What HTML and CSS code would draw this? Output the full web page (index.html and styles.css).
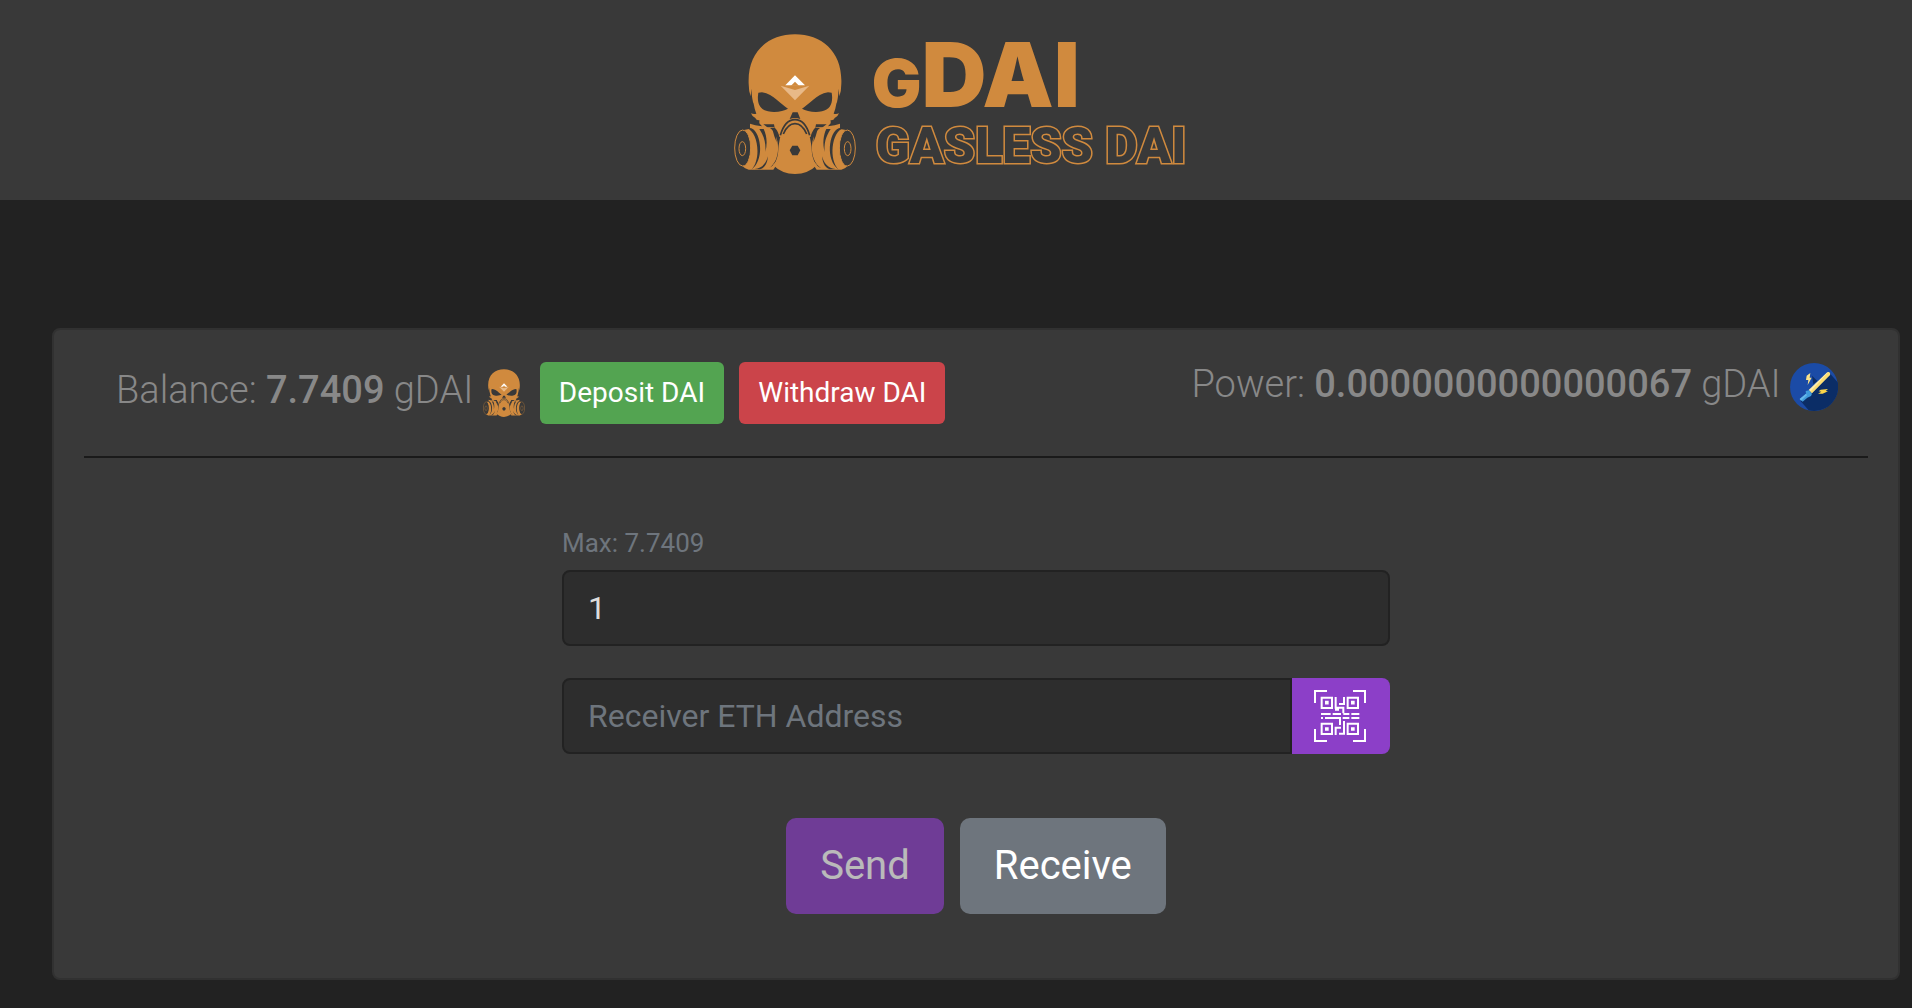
FILE: index.html
```
<!DOCTYPE html>
<html lang="en">
<head>
<meta charset="utf-8">
<title>gDAI - Gasless DAI</title>
<link rel="stylesheet" href="styles.css">
</head>
<body>
<svg class="sprite" aria-hidden="true">
    <symbol id="mask" viewBox="48 40 366 422">
	<path class="bone" d="M92 190C88 95 150 42 231 42C312 42 374 95 370 190Q370 212 364 228L362 205Q360 240 355 250Q353 264 347 280Q355 282 363 279Q359 290 350 293Q348 301 338 299V309L330 318L350 315L366 310V322L335 350H130L96 322V310L112 315L132 318L124 309V299Q114 301 112 293Q103 290 99 279Q107 282 115 280Q109 264 107 250Q102 240 100 205L98 228Q92 212 92 190Z"/>
	<path class="hole" d="M121 217C116 246 124 268 150 273C174 278 197 272 210 265C188 253 168 222 132 216ZM341 217C346 246 338 268 312 273C288 278 265 272 252 265C274 253 294 222 330 216Z"/>
	<path class="hole" d="M224 276H239L247 296Q231 290 215 296ZM136 312L168 312L170 322H150ZM326 312L294 312L292 322H312Z"/>
	<g id="filter">
	    <path class="bone" d="M76 331Q110 318 168 321C188 345 192 415 166 448H92Q78 444 73 436Z"/>
	    <ellipse class="ring" cx="74" cy="383" rx="24" ry="54"/>
	    <ellipse class="hole" cx="77" cy="384" rx="18" ry="51"/>
	    <ellipse class="ring" cx="73" cy="385" rx="10" ry="21"/>
	    <path class="hole" d="M74 372Q84 385 74 401Q66 387 74 372ZM86 324C122 334 130 420 100 448C140 420 130 336 100 324ZM124 326C140 350 144 372 142 395C149 370 146 344 137 326ZM110 446C132 444 144 430 150 408C148 432 138 444 126 447ZM156 323C186 344 192 418 152 444C200 420 192 340 170 322Z"/>
	    <path class="hole" d="M173 330L176 366Q168 348 164 330Z"/>
	</g>
	<use href="#filter" transform="matrix(-1 0 0 1 462 0)"/>
	<path class="bone" d="M231 308C253 308 265 328 276 352Q282 380 282 400Q286 424 297 434Q270 461 231 461Q192 461 165 434Q176 424 180 400Q180 380 186 352C197 328 209 308 231 308Z"/>
	<path class="arc" d="M187 345C196 314 212 298 231 298C250 298 266 314 275 345"/>
	<path class="arc" d="M196 341C205 320 215 310 231 310C247 310 257 320 266 341"/>
	<path class="hole" d="M223 376H239L247 390L239 405H223L215 390Z"/>
	<path class="gem" d="M231 165L261 195L231 195L202 195Z"/>
	<path class="bone" d="M231 184L243 196H219Z"/>
	<path class="gem-low" d="M188 196L231 209L274 196L231 240Z"/>
    </symbol>
</svg>
<div class="header">
    <a class="logo" href="#">
	<svg class="skull" role="img" aria-label="gDAI mask"><use href="#mask"/></svg>
	<span class="wordmark">
	    <span class="name"><small>G</small>DAI</span>
	    <span class="tagline">GASLESS DAI</span>
	</span>
    </a>
</div>
<div class="card">
    <div class="account">
	<div class="balance">
	    Balance: <strong>7.7409</strong> gDAI
	    <svg class="coin" aria-hidden="true"><use href="#mask"/></svg>
	    <button class="btn deposit" type="button">Deposit DAI</button>
	    <button class="btn withdraw" type="button">Withdraw DAI</button>
	</div>
	<div class="power">
	    Power: <strong>0.0000000000000067</strong> gDAI
	    <svg class="saber" viewBox="0 0 144 144" aria-hidden="true">
		<circle cx="72" cy="72" r="72" fill="#1b4ba6"/>
		<path d="M118 29L143 58A72 72 0 0 1 56 142L31 113Z" fill="#0b2d66"/>
		<path d="M66 38L82 54L70 64Z" fill="#0b2d66"/>
		<path d="M50 38L61 30L59 44L65 44L53 66L55 51L48 51Z" fill="#fbe38a"/>
		<path d="M92 80L114 78L107 84L114 85L98 92H84L94 86L86 85Z" fill="#fdd649"/>
		<path d="M110 29Q118 24 121 34L66 90L56 81Z" fill="#ffeeb0"/>
		<path d="M115 27Q121 29 120 36L66 90L61 86Z" fill="#fddd72"/>
		<path d="M47 84L57 82L66 92L63 99L52 104L38 116L29 108L48 92Z" fill="#409bdb"/>
		<path d="M29 108L48 92L51 97L33 113Z" fill="#67b8ea"/>
	    </svg>
	</div>
    </div>
    <form class="transfer">
	<label class="max" for="amount">Max: 7.7409</label>
	<input class="field" id="amount" type="text" value="1">
	<div class="receiver">
	    <input class="field" type="text" placeholder="Receiver ETH Address" aria-label="Receiver ETH Address">
	    <button class="scan" type="button" aria-label="Scan QR code">
		<svg class="qr" viewBox="102 60 156 156" fill="none" stroke="#fff" stroke-width="6">
		    <path d="M141 63H105V99M219 63H255V99M105 177V213H141M255 177V213H219"/>
		    <path d="M125 83H156V114H125ZM203 83H234V114H203ZM125 161H156V192H125ZM203 161H234V192H203Z"/>
		    <path d="M135 98H146M213 98H224M135 177H146M213 177H224" stroke-width="11"/>
		    <path d="M167 81V113H190V130M192 81V102H177M165 119H177M123 132H152M158 132H183M190 132H208M214 132H238M123 144H129M135 144H180V165M188 144H208M214 144H238M192 153V191H177M167 195V173H183"/>
		</svg>
	    </button>
	</div>
	<div class="actions">
	    <button class="btn send" type="submit" disabled>Send</button>
	    <button class="btn receive" type="button">Receive</button>
	</div>
    </form>
</div>
</body>
</html>
```
FILE: styles.css
```
* {
    box-sizing: border-box;
}
body {
    margin: 0;
    background: #222;
    color: #888;
    font-family: Roboto, sans-serif;
    font-size: 32px;
}
button, input {
    font-family: inherit;
}
.sprite {
    position: absolute;
    width: 0;
    height: 0;
}
.bone {
    fill: #d08a3e;
}
.hole {
    fill: #393939;
}
.ring {
    fill: #393939;
    stroke: #d08a3e;
    stroke-width: 3px;
}
.arc {
    fill: none;
    stroke: #393939;
    stroke-width: 5px;
}
.gem {
    fill: #fff;
}
.gem-low {
    fill: #e8b988;
}

.header {
    display: flex;
    justify-content: center;
    background: #393939;
    padding: 33px 0 25px 8px;
}
.logo {
    display: flex;
    gap: 16px;
    color: #d08a3e;
    text-decoration: none;
}
.skull {
    width: 122px;
    height: 142px;
}
.wordmark {
    display: flex;
    flex-direction: column;
    padding-top: 6px;
    font-weight: 900;
    white-space: nowrap;
}
.name {
    font-family: Inter, sans-serif;
    font-size: 90px;
    line-height: 72px;
}
.name small {
    font-size: 66px;
}
.tagline {
    padding-left: 4px;
    font-size: 50px;
    line-height: 54px;
    color: #393939;
    -webkit-text-stroke: 3px #d08a3e;
    paint-order: stroke fill;
}

.card {
    margin: 128px 12px 28px 52px;
    padding: 30px;
    background: #393939;
    border: 2px solid #313131;
    border-radius: 8px;
}
.account {
    display: flex;
    justify-content: space-between;
    padding: 0 30px 32px 32px;
    border-bottom: 2px solid #1a1a1a;
    font-size: 38px;
    font-weight: 300;
}
.account strong {
    font-weight: 500;
}
.balance {
    line-height: 60px;
}
.power {
    line-height: 48px;
}
.coin, .saber {
    vertical-align: middle;
    height: 48px;
}
.coin {
    width: 42px;
}
.saber {
    width: 48px;
}

.btn {
    border: 0;
    color: #fff;
    font-weight: 400;
    vertical-align: middle;
}
.deposit, .withdraw {
    margin-left: 6px;
    padding: 0 19px;
    font-size: 28px;
    line-height: 62px;
    border-radius: 6px;
}
.deposit {
    background: #53a451;
}
.withdraw {
    background: #cb444a;
}

.transfer {
    display: flex;
    flex-direction: column;
    width: 828px;
    max-width: 100%;
    margin: 0 auto;
    padding: 66px 0 34px;
}
.max {
    color: #6e757d;
    font-size: 26px;
    line-height: 38px;
    margin-bottom: 8px;
}
.field {
    width: 100%;
    height: 76px;
    padding: 0 24px;
    background: #2d2d2d;
    border: 2px solid #222;
    border-radius: 8px;
    color: #ddd;
    font-size: 32px;
}
.field::placeholder {
    color: #6e757d;
    opacity: 1;
}
.receiver {
    display: flex;
    margin: 32px 0 64px;
}
.receiver .field {
    flex: 1;
    border-radius: 8px 0 0 8px;
}
.scan {
    display: flex;
    align-items: center;
    width: 98px;
    padding: 0 22px;
    background: #8c3fc8;
    border: 0;
    border-radius: 0 8px 8px 0;
}
.qr {
    width: 52px;
    height: 52px;
}
.actions {
    display: flex;
    justify-content: center;
    gap: 16px;
}
.send, .receive {
    padding: 0 34px;
    font-size: 40px;
    line-height: 96px;
    border-radius: 10px;
}
.send {
    background: #8c3fc8;
    opacity: 0.65;
}
.receive {
    background: #6e757d;
}
```
